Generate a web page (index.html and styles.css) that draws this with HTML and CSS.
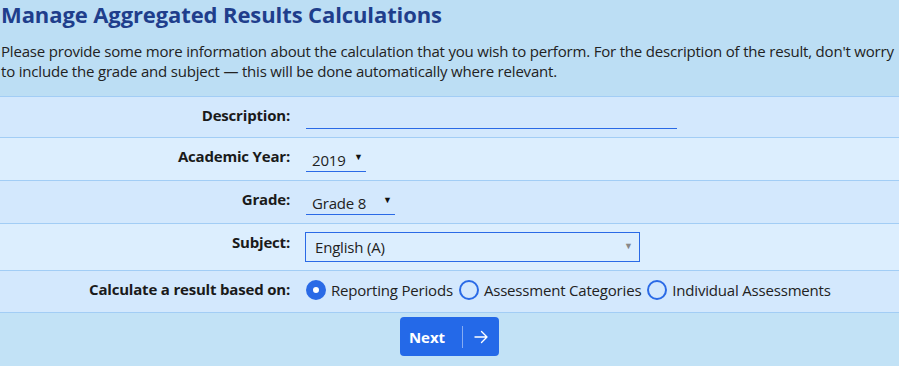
FILE: index.html
```html
<!DOCTYPE html>
<html lang="en">
<head>
<meta charset="utf-8">
<title>Manage Aggregated Results Calculations</title>
<link rel="stylesheet" href="styles.css">
</head>
<body>
<main class="page">
  <h1 class="title">Manage Aggregated Results Calculations</h1>
  <p class="intro">Please provide some more information about the calculation that you wish to perform. For the description of the result, don't worry to include the grade and subject — this will be done automatically where relevant.</p>
  <form class="form">
    <div class="row row-a">
      <label class="label" for="desc">Description:</label>
      <div class="field"><input class="text-input" id="desc" type="text"></div>
    </div>
    <div class="row row-b">
      <label class="label" for="year">Academic Year:</label>
      <div class="field">
        <span class="select-wrap year">
          <select class="select" id="year"><option>2019</option></select>
          <span class="caret">▼</span>
        </span>
      </div>
    </div>
    <div class="row row-a">
      <label class="label" for="grade">Grade:</label>
      <div class="field">
        <span class="select-wrap grade">
          <select class="select" id="grade"><option>Grade 8</option></select>
          <span class="caret">▼</span>
        </span>
      </div>
    </div>
    <div class="row row-b row-subject">
      <label class="label" for="subject">Subject:</label>
      <div class="field">
        <span class="select-wrap subject">
          <select class="select boxed" id="subject"><option>English (A)</option></select>
          <span class="caret grey">▼</span>
        </span>
      </div>
    </div>
    <div class="row row-a">
      <span class="label">Calculate a result based on:</span>
      <div class="field radios">
        <label class="radio"><input type="radio" name="basis" checked><span class="dot"></span>Reporting Periods</label>
        <label class="radio"><input type="radio" name="basis"><span class="dot"></span>Assessment Categories</label>
        <label class="radio"><input type="radio" name="basis"><span class="dot"></span>Individual Assessments</label>
      </div>
    </div>
    <div class="actions">
      <button type="button" class="btn">
        <span class="btn-text">Next</span>
        <span class="btn-sep"></span>
        <svg class="btn-icon" width="14" height="14" viewBox="0 0 14 14" aria-hidden="true"><path d="M1 7h12M7.5 1.5 13 7l-5.5 5.5" fill="none" stroke="#fff" stroke-width="1.4" stroke-linecap="round" stroke-linejoin="round"/></svg>
      </button>
    </div>
  </form>
</main>
</body>
</html>
```
FILE: styles.css
```css
html, body {
  margin: 0;
  padding: 0;
}
body {
  background: #bcdef4;
  font-family: "Open Sans", "Noto Sans", sans-serif;
  color: #222;
  font-size: 15px;
  line-height: 20px;
  letter-spacing: -0.19px;
}
.page {
  padding: 0;
}
.title {
  margin: 0;
  padding: 0 0 0 1px;
  font-size: 22px;
  line-height: 28px;
  font-weight: 700;
  letter-spacing: -0.1px;
  color: #1f3e8c;
}
.intro {
  margin: 13px 0 15px;
  padding-left: 1px;
}
.form {
  border-top: 1px solid #a2cdf5;
}
.row {
  display: grid;
  grid-template-columns: 290px 1fr;
  column-gap: 16px;
  padding: 8px 0;
  border-bottom: 1px solid #a2cdf5;
}
.row-a { background: #d3e8fd; }
.row-b { background: #dceefe; }
.label {
  text-align: right;
  font-weight: 700;
  color: #1a1a1a;
}
.field {
  display: flex;
  align-items: flex-start;
}
.text-input {
  width: 371px;
  height: 24px;
  box-sizing: border-box;
  border: 0;
  border-bottom: 1px solid #2a6ae6;
  background: transparent;
  font: inherit;
  outline: none;
}
.select-wrap {
  position: relative;
  display: inline-block;
}
.select {
  display: block;
  appearance: none;
  -webkit-appearance: none;
  border: 0;
  border-bottom: 1px solid #2a6ae6;
  border-radius: 0;
  background: transparent;
  font: inherit;
  letter-spacing: inherit;
  color: #222;
  height: 26px;
  padding: 2px 0 0 6px;
  box-sizing: border-box;
  outline: none;
}
.year .select { width: 60px; }
.grade .select { width: 89px; }
.select.boxed {
  width: 335px;
  height: 30px;
  border: 1px solid #2a6ae6;
  padding: 0 0 0 9px;
  margin-left: -1px;
}
.caret {
  position: absolute;
  top: 5px;
  font-size: 9px;
  line-height: 12px;
  color: #111;
  pointer-events: none;
}
.year .caret { left: 48px; }
.grade .caret { left: 77px; }
.caret.grey {
  color: #888;
  top: 8px;
  left: 318px;
}
.radios {
  gap: 6px;
  padding-top: 1px;
  min-height: 24px;
}
.radio {
  display: inline-flex;
  align-items: center;
  gap: 5px;
  line-height: 20px;
}
.radio input {
  position: absolute;
  opacity: 0;
  width: 0;
  height: 0;
  margin: 0;
}
.dot {
  width: 20px;
  height: 20px;
  box-sizing: border-box;
  border: 2px solid #2a6ae6;
  border-radius: 50%;
  background: transparent;
}
.radio input:checked + .dot {
  border: 7px solid #2a6ae6;
  background: #fff;
}
.actions {
  display: flex;
  justify-content: center;
  padding: 4px 0 10px;
  background: #c2e2f6;
}
.btn {
  display: inline-flex;
  align-items: center;
  height: 39px;
  padding: 0 11px 0 9px;
  border: 0;
  border-radius: 4px;
  background: #2469e8;
  color: #fff;
  font: inherit;
  font-weight: 700;
  font-size: 15px;
}
.btn-sep {
  width: 1px;
  height: 22px;
  margin: 0 11px 0 17px;
  background: rgba(255,255,255,0.45);
}
.btn-icon {
  display: block;
}
```
